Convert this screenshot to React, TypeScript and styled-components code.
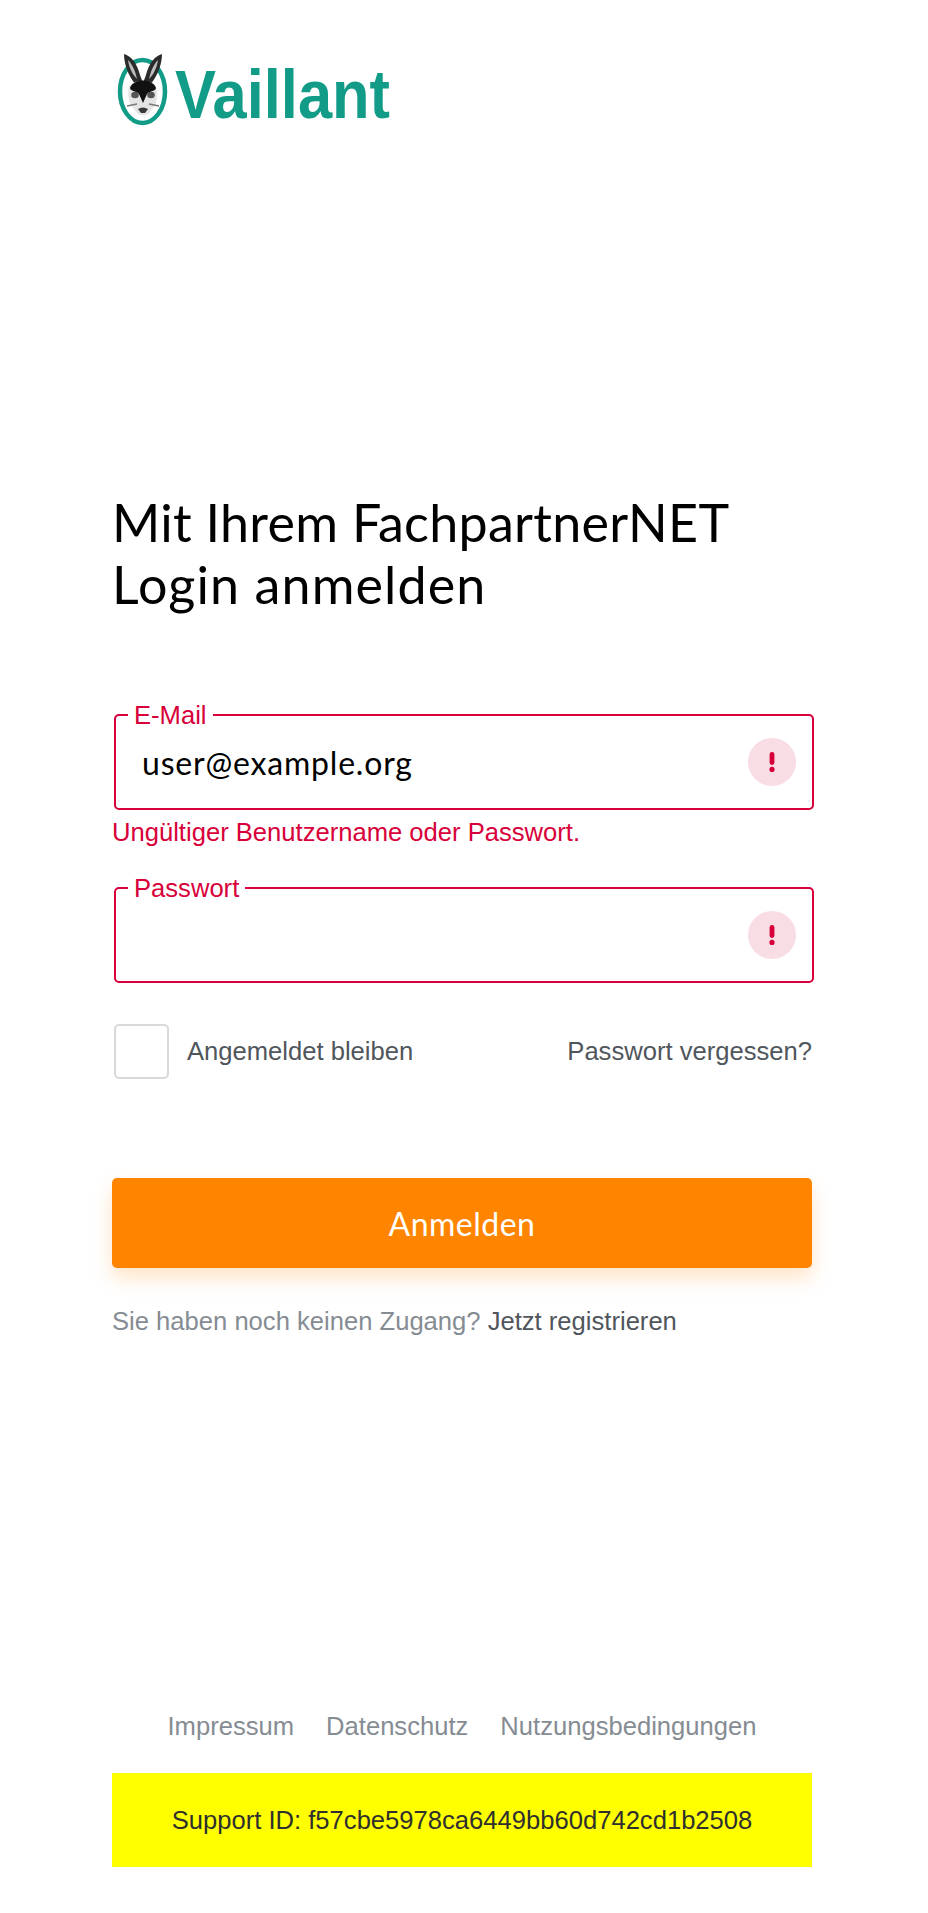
import styled, { createGlobalStyle } from 'styled-components';

const GlobalStyle = createGlobalStyle`
    html, body {
        margin: 0;
        padding: 0;
        background: #ffffff;
    }

    body {
        font-family: "Liberation Sans", Arial, sans-serif;
    }
`

const Page = styled.div`
    width: 700px;
    height: 1913px;
    margin-left: 112px;
    display: flex;
    flex-direction: column;
`

const LogoWrap = styled.div`
    height: 82px;
    padding-top: 53px;
    margin-left: 3px;
    filter: blur(0.6px);
`

const Heading = styled.h1`
    margin: 356px 0 0;
    font-family: Lato, sans-serif;
    font-weight: 400;
    font-size: 52px;
    line-height: 62px;
    letter-spacing: 0.3px;
    color: #000000;
`

const HeadingLine = styled.span<{ $tracking?: number }>`
    display: block;
    letter-spacing: ${({ $tracking }) => $tracking ?? 0.3}px;
`

const Form = styled.form`
    margin-top: 89px;
    display: flex;
    flex-direction: column;
`

const Field = styled.fieldset`
    margin: 0 -2px 0 2px;
    padding: 12px 16px 0 26px;
    height: 106px;
    box-sizing: border-box;
    border: 2px solid #d7003a;
    border-radius: 5px;
    display: flex;
    align-items: center;
    justify-content: space-between;

    legend {
        margin-left: -14px;
        padding: 0 6px;
        font-size: 25.6px;
        line-height: 22px;
        color: #d7003a;
    }
`

const FieldValue = styled.span`
    font-family: Lato, sans-serif;
    font-size: 32px;
    letter-spacing: 0.8px;
    color: #000000;
`

const ErrorBadge = styled.span`
    width: 48px;
    height: 48px;
    margin-left: auto;
    border-radius: 50%;
    background: #f8dde4;
    display: flex;
    align-items: center;
    justify-content: center;
`

const ErrorText = styled.p`
    margin: 6px 0 29px;
    font-size: 25.6px;
    line-height: 32px;
    color: #d7003a;
`

const OptionsRow = styled.div`
    margin: 41px 0 0 2px;
    display: flex;
    align-items: center;
    justify-content: space-between;
`

const Remember = styled.label`
    display: flex;
    align-items: center;
    gap: 18px;
    font-size: 25.6px;
    color: #50565c;
`

const CheckBox = styled.span`
    width: 55px;
    height: 55px;
    box-sizing: border-box;
    border: 2px solid #d9d9d9;
    border-radius: 5px;
    background: #ffffff;
`

const TextLink = styled.a<{ $tone?: 'dark' | 'muted' }>`
    font-size: 25.6px;
    color: ${({ $tone }) => ($tone === 'muted' ? '#868c93' : '#50565c')};
    text-decoration: none;
`

const SubmitButton = styled.button`
    margin-top: 99px;
    width: 700px;
    height: 90px;
    border: 0;
    border-radius: 5px;
    background: #ff8500;
    box-shadow: 0 10px 20px rgba(255, 133, 0, 0.22);
    color: #ffffff;
    font-family: Lato, sans-serif;
    font-size: 32px;
    letter-spacing: 0.5px;
`

const RegisterLine = styled.p`
    margin: 37px 0 0;
    font-size: 25.6px;
    line-height: 32px;
    color: #868c93;
`

const FooterLinks = styled.nav`
    margin-top: auto;
    display: flex;
    justify-content: center;
    gap: 32px;
`

const SupportBar = styled.div`
    margin: 32px 0 46px;
    height: 94px;
    background: #ffff00;
    color: #2f2f2f;
    font-size: 25.6px;
    display: flex;
    align-items: center;
    justify-content: center;
`

const Logo = () => (
    <svg width="310" height="82" viewBox="0 0 310 82" aria-label="Vaillant">
        <ellipse cx="27.5" cy="38.5" rx="22.5" ry="31.5" fill="#ffffff" stroke="#129c88" strokeWidth="4.5" />
        {/* ears */}
        <path d="M9 1 C16 3 22 10 25 22 L28 30 L21 32 C14 24 9 12 9 1 Z" fill="#2b2b2b" />
        <path d="M47 1 C40 3 34 10 31 22 L28 30 L35 32 C42 24 47 12 47 1 Z" fill="#2b2b2b" />
        <path d="M13 7 C17 11 20 17 22 26 C17 21 14 14 13 7 Z" fill="#bdbdbd" />
        <path d="M43 7 C39 11 36 17 34 26 C39 21 42 14 43 7 Z" fill="#bdbdbd" />
        {/* head */}
        <path d="M14 34 C17 26 38 26 41 34 C43 41 42 48 40 52 L34 60 C31 63 25 63 22 60 L16 52 C14 48 12 41 14 34 Z" fill="#e4e4e4" />
        <path d="M15 35 C18 25 38 25 41 35 C40 39 36 37 32 41 L28 50 L24 41 C20 37 16 39 15 35 Z" fill="#111111" />
        <ellipse cx="20" cy="42" rx="3.8" ry="3.2" fill="#555555" />
        <ellipse cx="36" cy="42" rx="3.8" ry="3.2" fill="#555555" />
        <path d="M23 56 Q28 53 33 56 L30 60 L26 60 Z" fill="#3a3a3a" />
        <path d="M12 53 L22 51 M44 53 L34 51" stroke="#777777" strokeWidth="1.4" />
        <text
            x="60"
            y="65"
            textLength="215"
            lengthAdjust="spacingAndGlyphs"
            fontFamily="'Liberation Sans', sans-serif"
            fontWeight="700"
            fontSize="68"
            fill="#129c88"
        >
            Vaillant
        </text>
    </svg>
)

const AlertMark = () => (
    <svg width="6" height="20" viewBox="0 0 6 20">
        <rect x="0.6" y="0" width="4.8" height="13" rx="2.4" fill="#d7003a" />
        <circle cx="3" cy="17.4" r="2.6" fill="#d7003a" />
    </svg>
)

const App = () => {
    return (
        <Page>
            <GlobalStyle />
            <LogoWrap>
                <Logo />
            </LogoWrap>
            <Heading>
                <HeadingLine>Mit Ihrem FachpartnerNET</HeadingLine>
                <HeadingLine $tracking={1.1}>Login anmelden</HeadingLine>
            </Heading>
            <Form>
                <Field>
                    <legend>E-Mail</legend>
                    <FieldValue>user@example.org</FieldValue>
                    <ErrorBadge><AlertMark /></ErrorBadge>
                </Field>
                <ErrorText>Ungültiger Benutzername oder Passwort.</ErrorText>
                <Field>
                    <legend>Passwort</legend>
                    <ErrorBadge><AlertMark /></ErrorBadge>
                </Field>
                <OptionsRow>
                    <Remember>
                        <CheckBox />
                        Angemeldet bleiben
                    </Remember>
                    <TextLink href="#">Passwort vergessen?</TextLink>
                </OptionsRow>
                <SubmitButton type="button">Anmelden</SubmitButton>
            </Form>
            <RegisterLine>
                Sie haben noch keinen Zugang? <TextLink href="#">Jetzt registrieren</TextLink>
            </RegisterLine>
            <FooterLinks>
                <TextLink $tone="muted" href="#">Impressum</TextLink>
                <TextLink $tone="muted" href="#">Datenschutz</TextLink>
                <TextLink $tone="muted" href="#">Nutzungsbedingungen</TextLink>
            </FooterLinks>
            <SupportBar>Support ID: f57cbe5978ca6449bb60d742cd1b2508</SupportBar>
        </Page>
    )
}

export default App
